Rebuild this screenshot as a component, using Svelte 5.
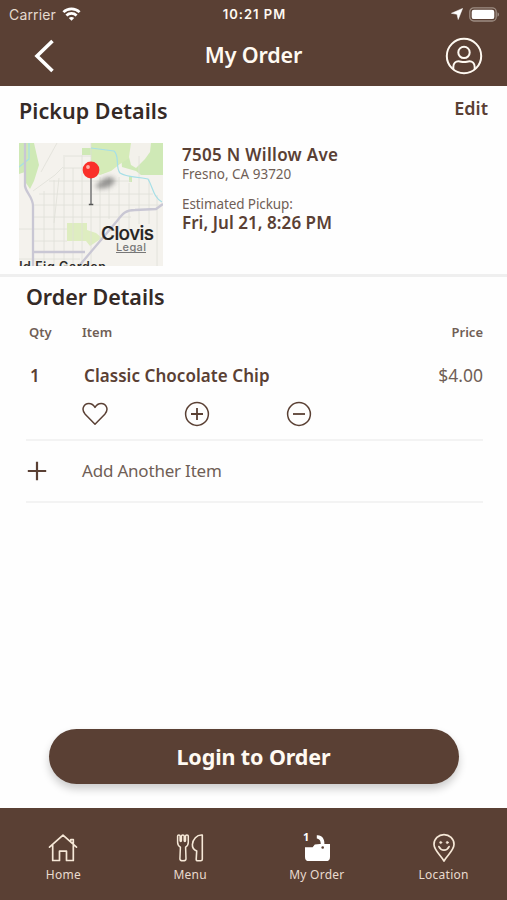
<script>
  const tabs = [
    { id: 'home', label: 'Home' },
    { id: 'menu', label: 'Menu' },
    { id: 'bag', label: 'My Order' },
    { id: 'location', label: 'Location' }
  ];
</script>

<div class="screen">
  <header>
    <div class="status">
      <div class="carrier">
        <span>Carrier</span>
        <svg width="19" height="14" viewBox="0 0 18 14" fill="none" stroke="#fff" stroke-width="2.7">
          <path d="M.9 5.1C5.4.7 12.600.7 17.100 5.100M3.900 8.500c2.900-2.800 7.300-2.800 10.200 0" />
          <path d="M9 13.700 6.300 11c1.500-1.400 3.900-1.400 5.400 0z" fill="#fff" stroke="none" />
        </svg>
      </div>
      <span class="time">10:21 PM</span>
      <div class="power">
        <svg width="12" height="12" viewBox="0 0 12 12"><path d="M11.600.4 7.200 11.500 6 6.300.4 5.300z" fill="#fff" stroke="#fff" stroke-width=".5" /></svg>
        <svg width="31" height="15" viewBox="0 0 31 15">
          <rect x=".8" y=".8" width="26.400" height="13.200" rx="4" fill="none" stroke="#9d8c82" stroke-width="1.300" />
          <rect x="2.700" y="2.700" width="22.600" height="9.400" rx="2.200" fill="#fff" />
          <path d="M28.500 5.200c2 .8 2 3.700 0 4.500z" fill="#9d8c82" />
        </svg>
      </div>
    </div>
    <div class="nav">
      <svg width="22" height="34" viewBox="0 0 22 34" fill="none" stroke="#fff" stroke-width="3.600"><path d="M19.500 2 4 17l15.500 15" /></svg>
      <h1>My Order</h1>
      <svg width="38" height="38" viewBox="0 0 38 38" fill="none" stroke="#fffaf2" stroke-width="2">
        <circle cx="19" cy="19" r="17.200" /><circle cx="19" cy="15.400" r="5.700" />
        <path d="M8.300 32.200V30c0-3.800 2.500-5.700 5.200-5.700 2.200 0 2.900.8 5.500.8s3.300-.8 5.500-.8c2.700 0 5.200 1.900 5.200 5.700v2.200" />
      </svg>
    </div>
  </header>

  <section class="pickup">
    <div class="heading"><h2>Pickup Details</h2><span class="edit">Edit</span></div>
    <div class="place">
      <svg class="map" width="144" height="123" viewBox="0 0 144 123">
        <defs><filter id="soft" x="-50%" y="-50%" width="200%" height="200%"><feGaussianBlur stdDeviation="2.800" /></filter></defs>
        <rect width="144" height="123" fill="#f4f2ed" />
        <g fill="#cfe9b6">
          <path d="M0 0h15l5 22-5 16-4 8L7 40 6 29 0 31z" /><path d="M112 0h32v32h-22l-5-4-14-4-1-12z" />
          <path d="M72 0h40v14l-11 7-9 7-11 4-9-2z" fill="#d5ebb8" />
          <path d="M63 5h10v7H63zM110 33h3v6h-3z" /><path d="M48 80h20v7l9 3 6 5-12 8-4-5H48z" fill="#deedc0" />
        </g>
        <path d="M112 0h20l-1 9-5 7-9 9-5-3-2-8z" fill="#f3f1eb" />
        <g stroke="#e0dfd8" fill="none" stroke-width=".8">
          <path d="M25 48v75M35 37v86M45 12v111M54 25v98M63 12v111M72 0v123M81 34v65M90 34v42M100 34v52M110 40v48M120 13v68M130 36v45M138 52v71" />
          <path d="M46 13h26M44 25h28M30 38h82M20 51h114M15 62h127M15 74h97M0 86h48M15 98h33M0 116h61M14 48l22-16 8-8M22 29 38 0M35 80l5-45" />
        </g>
        <path d="M10 0v16L0 24M72 5l23 3c6 5 1 16 6 22 8 5 16 3 28 6 5 8 5 18 14 23" fill="none" stroke="#a6dfe7" stroke-width="1.200" />
        <g fill="none" stroke="#c9c7d4" stroke-width="2.300"><path d="M6 0v43c1 7 8 11 8 20v60M14 109h52M60 123l38-45c6-8 9-11 18-11l21-1 7-5" /></g>
        <path d="m76 43 10-8c6-2 13 1 9 5-4 5-12 7-19 4z" fill="#555" opacity=".6" filter="url(#soft)" />
        <path d="M72 33v28" stroke="#858585" stroke-width="1.700" /><path d="M69.800 61.500h4.500" stroke="#555" stroke-width="1.500" />
        <circle cx="72" cy="27" r="8.400" fill="#fa3029" /><circle cx="69" cy="24" r="1.900" fill="#ffb0a8" />
        <text x="82" y="96.500" class="city" textLength="53">Clovis</text>
        <text x="97" y="108" class="legal" textLength="30">Legal</text><path d="M97 109.500h30" stroke="#777" />
        <text x="-10" y="128.300" class="garden" textLength="97">Old Fig Garden</text>
      </svg>
      <div class="details">
        <strong class="address">7505 N Willow Ave</strong>
        <span class="city-line">Fresno, CA 93720</span>
        <span class="estimate">Estimated Pickup:</span>
        <strong class="date">Fri, Jul 21, 8:26 PM</strong>
      </div>
    </div>
  </section>

  <section class="order">
    <h2>Order Details</h2>
    <div class="row labels"><span class="qty">Qty</span><span class="item">Item</span><span class="price">Price</span></div>
    <div class="row product"><strong class="qty">1</strong><strong class="item">Classic Chocolate Chip</strong><span class="price">$4.00</span></div>
    <div class="actions">
      <svg width="26" height="26" viewBox="0 0 26 26"><path d="M13 23.200 3.200 13.300C-1.300 8.200 2 2.400 6.800 2.400c2.700 0 4.800 1.400 6.200 4 1.400-2.600 3.500-4 6.200-4 4.800 0 8.100 5.800 3.600 10.900z" /></svg>
      <svg width="26" height="26" viewBox="0 0 26 26"><circle cx="13" cy="13" r="11.400" /><path d="M13 7v12M7 13h12" stroke-width="1.800" /></svg>
      <svg width="26" height="26" viewBox="0 0 26 26"><circle cx="13" cy="13" r="11.400" /><path d="M7 13h12" stroke-width="1.800" /></svg>
    </div>
    <div class="add">
      <svg width="20" height="20" viewBox="0 0 20 20"><path d="M10 .8v18.400M.8 10h18.400" fill="none" stroke="#5a4034" stroke-width="2.200" /></svg>
      <span>Add Another Item</span>
    </div>
  </section>

  <main><button>Login to Order</button></main>

  <footer>
    {#each tabs as tab (tab.id)}
      <div class="tab">
        <svg width="34" height="34" viewBox="0 0 34 34" fill="none" stroke="#f6e8d7" stroke-width="1.700" stroke-linejoin="round" stroke-linecap="round">
          {#if tab.id === 'home'}
            <path d="M3.500 17.200 17 5.200l13.500 12M6.700 15.500v15h6.800v-9.300h7v9.300h6.800v-15M24.800 11.200V9.500h2.500v4" />
          {:else if tab.id === 'menu'}
            <path stroke-width="1.500" d="M4.600 6c0-1.500 2.500-1.500 2.500 0v4.500c0 1.200 1.300 1.200 1.300 0V6c0-1.500 2.800-1.500 2.800 0v4.500c0 1.200 1.300 1.200 1.300 0V6c0-1.500 2.800-1.500 2.800 0v6.300c0 2.300-.9 3.900-2.700 4.900L13 29c0 1.300-.9 1.800-3.100 1.800S6.900 30.300 6.900 29l.5-11.800c-1.900-1-2.800-2.600-2.800-4.900z" />
            <path stroke-width="1.600" d="M29.300 5v24.300c0 1-.6 1.500-1.600 1.500h-3c-1 0-1.600-.5-1.500-1.600l.5-8.200c-3-1.300-4.500-3.600-4.300-6.500C19.800 9.500 23.600 4.500 29.300 5z" />
          {:else if tab.id === 'bag'}
            <path d="M5 17.200h7.600l2.200-2.700 5-.5H30v12.900c0 2.900-1.500 4.200-4.200 4.200H9.200C6.500 31.100 5 29.800 5 26.900z" fill="#fff" stroke="none" />
            <path d="M16.800 5.200c4.800-.6 8 3.200 7.600 9.300h-3.600c-.1-3.800-1-5.200-4-5.900z" fill="#fff" stroke="none" />
            <circle cx="22.700" cy="17.500" r="1.300" fill="#5a4034" stroke="none" />
            <text x="3" y="10.500" class="badge">1</text>
          {:else}
            <path d="M17 31C13.500 24.700 7 20.500 7 14.300a10 9.700 0 0 1 20 0C27 20.500 20.500 24.700 17 31z" />
            <path d="M11.900 16.600c2.300 4.700 7.900 4.700 10.200 0" /><circle cx="13.700" cy="12.500" r="1.100" fill="#f6e8d7" stroke-width=".6" /><circle cx="20.300" cy="12.500" r="1.100" fill="#f6e8d7" stroke-width=".6" />
          {/if}
        </svg>
        <span>{tab.label}</span>
      </div>
    {/each}
  </footer>
</div>

<style>
  :global(body) { margin: 0; background: #fefefe; }
  * { box-sizing: border-box; }
  svg { display: block; flex: none; }
  h1, h2 { margin: 0; font-weight: 600; }
  strong { font-weight: 600; }
  span, strong, h1, h2 { white-space: nowrap; }
  .screen { width: 507px; height: 900px; display: flex; flex-direction: column; background: #fefefe; color: #5a4034; font-family: 'Noto Sans', sans-serif; overflow: hidden; }
  header { height: 86px; flex: none; background: #5a4034; color: #fffaf2; }
  .status { height: 27px; display: grid; grid-template-columns: 1fr auto 1fr; align-items: center; padding: 0 7px 0 9px; font: 400 14px/27px Inter, sans-serif; }
  .carrier { display: flex; align-items: center; gap: 6px; color: #e5dacf; letter-spacing: .15px; }
  .time { font-weight: 600; font-size: 13px; letter-spacing: 1px; line-height: 28px; }
  .power { display: flex; justify-content: flex-end; align-items: center; gap: 6px; }
  .nav { height: 59px; display: grid; grid-template-columns: 1fr auto 1fr; align-items: center; padding: 0 24px 2px; }
  .nav svg:first-child { margin-left: 9px; }
  .nav svg:last-child { justify-self: end; }
  h1 { font-size: 21.500px; line-height: 30px; letter-spacing: -.15px; padding-bottom: 2px; }
  .pickup { height: 191px; flex: none; border-bottom: 3px solid #efefef; padding: 10px 19px 0; }
  .heading { height: 30px; display: flex; justify-content: space-between; align-items: flex-start; line-height: 30px; }
  h2 { font-size: 21.500px; line-height: 30px; color: #352a26; letter-spacing: .05px; }
  .edit { font-size: 18px; font-weight: 600; line-height: 24px; }
  .place { display: flex; gap: 19px; padding-top: 17px; }
  .city { font: 500 19px Inter, sans-serif; fill: #242321; stroke: #242321; stroke-width: .2px; }
  .legal { font: 500 11px Inter, sans-serif; fill: #777; }
  .garden { font: 600 12.500px Inter, sans-serif; fill: #302e2b; }
  .details { display: flex; flex-direction: column; padding-top: 1px; }
  .address { font-size: 17px; line-height: 22px; letter-spacing: .3px; }
  .city-line, .estimate { font-size: 13.500px; line-height: 16px; color: #705e56; }
  .estimate { margin-top: 14px; letter-spacing: -.1px; }
  .date { font-size: 17px; line-height: 22px; letter-spacing: .05px; }
  .order { flex: none; padding: 5px 24px 0 26px; }
  .order h2 { letter-spacing: -.05px; }
  .row { display: flex; align-items: center; }
  .labels { height: 30px; margin-top: 5px; font-size: 13px; font-weight: 600; color: #705e56; }
  .labels .qty { width: 53px; margin-left: 3px; }
  .price { margin-left: auto; }
  .product { height: 38px; margin-top: 9px; font-size: 17px; }
  .product .qty { width: 54px; padding-left: 4px; }
  .product .item { margin-left: 4px; letter-spacing: .05px; }
  .product .price { color: #705e56; font-size: 17.500px; }
  .actions { height: 47px; display: flex; gap: 76px; align-items: center; padding: 0 0 5px 56px; border-bottom: 2px solid #f3f3f3; }
  .actions svg { fill: none; stroke: #5a4034; stroke-width: 1.500; stroke-linejoin: round; }
  .add { height: 62px; display: flex; align-items: center; gap: 35px; padding: 0 0 1px 1px; border-bottom: 2px solid #f3f3f3; font-size: 17px; letter-spacing: -.2px; color: #705e56; }
  main { flex: 1; display: flex; align-items: flex-end; justify-content: center; padding-bottom: 24px; }
  button { width: 410px; height: 55px; border: 0; border-radius: 28px; background: #5a4034; color: #fffaf2; font: 700 21.500px 'Noto Sans', sans-serif; letter-spacing: -.1px; box-shadow: 0 5px 9px #0003; }
  footer { height: 92px; flex: none; background: #5a4034; color: #e9dbcf; display: flex; }
  .tab { flex: 1; padding-top: 22px; display: flex; flex-direction: column; align-items: center; font-size: 12px; line-height: 20px; letter-spacing: .25px; }
  .tab span { padding-top: 1px; }
  .badge { font: 700 11px 'Noto Sans', sans-serif; fill: #fff; stroke: none; }
</style>
